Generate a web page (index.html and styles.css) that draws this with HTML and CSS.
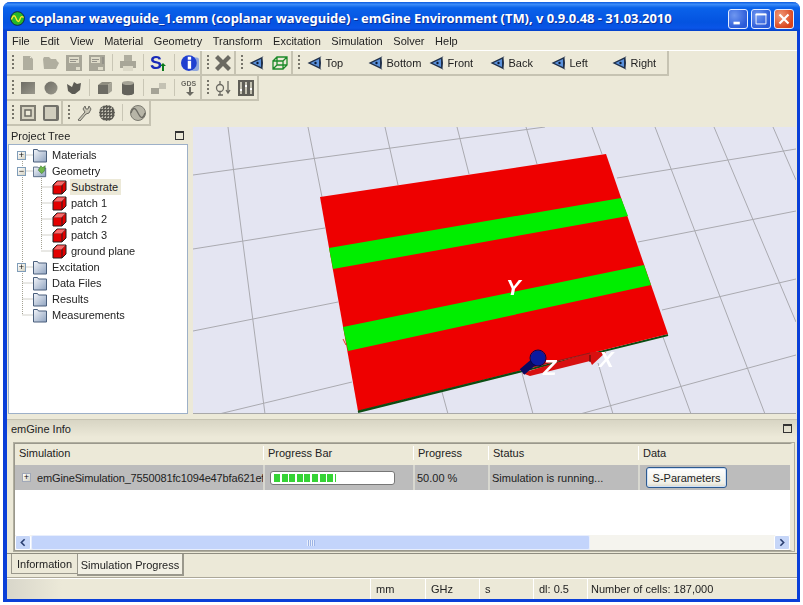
FILE: index.html
```html
<!DOCTYPE html>
<html lang="en">
<head>
<meta charset="utf-8">
<title>emGine Environment</title>
<link rel="stylesheet" href="styles.css">
</head>
<body>
<svg class="defs" width="0" height="0" aria-hidden="true">
  <defs>
    <linearGradient id="gFolder" x1="0" y1="0" x2="1" y2="1"><stop offset="0" stop-color="#f4f6fa"/><stop offset="1" stop-color="#8fa3c0"/></linearGradient>
    <linearGradient id="gGrey" x1="0" y1="0" x2="1" y2="1"><stop offset="0" stop-color="#6d6c64"/><stop offset="1" stop-color="#9a988c"/></linearGradient>
    <symbol id="i-new" viewBox="0 0 16 16"><path d="M3 1h7l3 3v11H3z" fill="#b0ae9f"/><path d="M10 2h1v1h-1z" fill="#ece9d8"/></symbol>
    <symbol id="i-open" viewBox="0 0 16 16"><path d="M0 4l1-2h5l2 2h5l1 2 2 2-3 6H1z" fill="#b0ae9f"/></symbol>
    <symbol id="i-save" viewBox="0 0 16 16"><path d="M0 0h16v16H0z" fill="#a8a698"/><path d="M3 2h10v6H3z" fill="#dedbc9"/><path d="M4 4h8v1H4zM4 6h6v1H4z" fill="#95938a"/><path d="M10 12h4v3h-4z" fill="#dedbc9"/></symbol>
    <symbol id="i-saveas" viewBox="0 0 16 16"><path d="M0 0h16v16H0z" fill="#a8a698"/><path d="M2 2h9v6H2z" fill="#dedbc9"/><path d="M3 4h7v1H3zM3 6h5v1H3zM13 2h2v7h-2z" fill="#95938a"/><path d="M9 12h5v3H9z" fill="#dedbc9"/></symbol>
    <symbol id="i-print" viewBox="0 0 16 16"><path d="M4 0h8v6H4z" fill="#b0ae9f"/><path d="M0 6h16v7H0z" fill="#a8a698"/><path d="M3 11h10v5H3z" fill="#dcd9c8"/></symbol>
    <symbol id="i-s" viewBox="0 0 18 18"><text x="0" y="15" class="svg-s">S</text><path d="M10 12l3-3 3 3h-2v5h-2v-5z" fill="#0a7a1c"/></symbol>
    <symbol id="i-info" viewBox="0 0 16 16"><rect x="9" y="3" width="7" height="12" rx="2" fill="#8fa6dc"/><circle cx="7" cy="8" r="7" fill="#1f3fd0"/><path d="M6 2.500h3v2.500H6zM6 6h3v7H6z" fill="#fff"/></symbol>
    <symbol id="i-x" viewBox="0 0 16 16"><path d="M3 0l5 5 5-5 3 3-5 5 5 5-3 3-5-5-5 5-3-3 5-5-5-5z" fill="#6b6a62"/></symbol>
    <symbol id="i-view" viewBox="0 0 16 14"><path d="M0.500 7L13 1l1.500-1-1 1.500.5 5.500-.5 5.500 1 1.500-1.500-1z" fill="#20304a"/><path d="M3.500 7L12 3v8z" fill="#5b92dc"/><circle cx="8.500" cy="7" r="1.200" fill="#0d1a33"/></symbol>
    <symbol id="i-wire" viewBox="0 0 16 14"><path d="M1 5h10v8H1zM1 5l4-4h10v8l-4 4M5 1v8h10M5 9l-4 4M11 5l4-4" fill="none" stroke="#1c8a2a" stroke-width="1.300"/></symbol>
    <symbol id="i-rect" viewBox="0 0 16 16"><rect x="1" y="2" width="14" height="12" fill="url(#gGrey)"/></symbol>
    <symbol id="i-circ" viewBox="0 0 16 16"><circle cx="8" cy="8" r="6.500" fill="url(#gGrey)"/></symbol>
    <symbol id="i-poly" viewBox="0 0 16 16"><path d="M1 4l5 3 2-5 3 2 4-1-1 7-5 4H6L2 11z" fill="#5c5b54"/></symbol>
    <symbol id="i-box" viewBox="0 0 16 16"><path d="M1 5h10v9H1z" fill="#6d6c64"/><path d="M1 5l4-3h10l-4 3z" fill="#8f8d80"/><path d="M11 5l4-3v9l-4 3z" fill="#a5a396"/></symbol>
    <symbol id="i-cyl" viewBox="0 0 16 16"><path d="M2 3h12v10c0 3-12 3-12 0z" fill="#63625b"/><ellipse cx="8" cy="3" rx="6" ry="2" fill="#a5a396"/></symbol>
    <symbol id="i-dual" viewBox="0 0 16 16"><path d="M0 8h8v6H0z" fill="#a5a396"/><path d="M8 3h7v6H8z" fill="#c4c2b4"/></symbol>
    <symbol id="i-gds" viewBox="0 0 18 18"><text x="0" y="7" class="svg-gds">GDS</text><path d="M8 8h2v5h3l-4 4-4-4h3z" fill="#6b6a62"/></symbol>
    <symbol id="i-port" viewBox="0 0 16 16"><circle cx="5" cy="8" r="3.500" fill="none" stroke="#6b6a62" stroke-width="1.300"/><path d="M5 1v3M5 12v3M3 15h5M13 1v11M11 10l2 3 2-3" fill="none" stroke="#6b6a62" stroke-width="1.300"/></symbol>
    <symbol id="i-sliders" viewBox="0 0 16 16"><rect width="16" height="16" fill="#5f5e57"/><path d="M3 2v12M8 2v12M13 2v12" stroke="#e5e2d0" stroke-width="1.500"/><path d="M2 9h2v2H2zM7 5h2v2H7zM12 8h2v2h-2z" fill="#fff"/></symbol>
    <symbol id="i-frame" viewBox="0 0 16 16"><rect width="16" height="16" fill="#807e73"/><rect x="2" y="2" width="12" height="12" fill="#d6d3c2"/><rect x="5" y="5" width="6" height="6" fill="#ece9d8" stroke="#6b6a62" stroke-width="1.500"/></symbol>
    <symbol id="i-solid" viewBox="0 0 16 16"><rect width="16" height="16" rx="2" fill="#72716a"/><rect x="2" y="2" width="11" height="12" fill="#d0cdbd"/></symbol>
    <symbol id="i-wrench" viewBox="0 0 16 16"><path d="M2 15l7-8-2-3 2-3 1 3 2 0 1-3 2 3-2 4-3 1-6 7z" fill="#c9c6b6" stroke="#6b6a62"/></symbol>
    <symbol id="i-mesh" viewBox="0 0 16 16"><circle cx="8" cy="8" r="8" fill="#5c5b54"/><path d="M0 3h16M0 6h16M0 9h16M0 12h16M3 0v16M6 0v16M9 0v16M12 0v16" stroke="#ece9d8" stroke-width="1" stroke-dasharray="1 2"/></symbol>
    <symbol id="i-wave" viewBox="0 0 16 16"><circle cx="8" cy="8" r="7.500" fill="#b7b5a7" stroke="#7b7a70"/><path d="M1 8c2-6 4-6 7 0s5 6 7 0" fill="none" stroke="#6b6a62" stroke-width="1.300"/></symbol>
    <symbol id="i-folder" viewBox="0 0 14 16"><path d="M0.500 2.500h4l1 1.500h8v11h-13z" fill="url(#gFolder)" stroke="#4a5f7c"/></symbol>
    <symbol id="i-cube" viewBox="0 0 15 15"><path d="M1 5l4-4h9v9l-4 4H1z" fill="#e30000" stroke="#202020"/><path d="M1 5h9v9M10 5l4-4" fill="none" stroke="#202020"/><path d="M1.500 5.500l4-4h8l-4 4z" fill="#f86a6a"/></symbol>
  </defs>
</svg>

<div class="window">
  <header class="titlebar">
    <svg class="app-icon" viewBox="0 0 16 16"><circle cx="8" cy="8" r="7.300" fill="#28b82a" stroke="#123"/><path d="M1.500 9c2-5 3.500-5 5-1s3 4 4 1 2-4 4-2" fill="none" stroke="#ffe92e" stroke-width="1.500"/></svg>
    <span class="title-text">coplanar waveguide_1.emm (coplanar waveguide) - emGine Environment (TM), v 0.9.0.48 - 31.03.2010</span>
    <div class="win-btns">
      <span class="win-btn"><svg viewBox="0 0 20 20"><rect x="5" y="13" width="7" height="3" fill="#fff"/></svg></span>
      <span class="win-btn"><svg viewBox="0 0 20 20"><path d="M4.500 4.500h11v11h-11z" fill="none" stroke="#fff"/><path d="M4 4h12v2H4z" fill="#fff"/></svg></span>
      <span class="win-btn close"><svg viewBox="0 0 20 20"><path d="M5 5l10 10M15 5L5 15" stroke="#fff" stroke-width="2.400"/></svg></span>
    </div>
  </header>

  <nav class="menubar">
    <span>File</span><span>Edit</span><span>View</span><span>Material</span><span>Geometry</span><span>Transform</span><span>Excitation</span><span>Simulation</span><span>Solver</span><span>Help</span>
  </nav>

  <div class="toolrow first">
    <div class="toolbar w195"><i class="grip"></i>
      <b class="tb"><svg><use href="#i-new"/></svg></b><b class="tb"><svg><use href="#i-open"/></svg></b><b class="tb"><svg><use href="#i-save"/></svg></b><b class="tb"><svg><use href="#i-saveas"/></svg></b><i class="sep"></i>
      <b class="tb"><svg><use href="#i-print"/></svg></b><i class="sep"></i>
      <b class="tb"><svg class="lg"><use href="#i-s"/></svg></b><i class="sep"></i>
      <b class="tb"><svg class="lg"><use href="#i-info"/></svg></b>
    </div>
    <div class="toolbar w34"><i class="grip"></i><b class="tb"><svg><use href="#i-x"/></svg></b></div>
    <div class="toolbar w57"><i class="grip"></i><b class="tb"><svg><use href="#i-view"/></svg></b><b class="tb"><svg><use href="#i-wire"/></svg></b></div>
    <div class="toolbar w376"><i class="grip"></i>
      <span class="vb"><svg><use href="#i-view"/></svg>Top</span>
      <span class="vb"><svg><use href="#i-view"/></svg>Bottom</span>
      <span class="vb"><svg><use href="#i-view"/></svg>Front</span>
      <span class="vb"><svg><use href="#i-view"/></svg>Back</span>
      <span class="vb"><svg><use href="#i-view"/></svg>Left</span>
      <span class="vb"><svg><use href="#i-view"/></svg>Right</span>
    </div>
  </div>
  <div class="toolrow">
    <div class="toolbar w195"><i class="grip"></i>
      <b class="tb"><svg><use href="#i-rect"/></svg></b><b class="tb"><svg><use href="#i-circ"/></svg></b><b class="tb"><svg><use href="#i-poly"/></svg></b><i class="sep"></i>
      <b class="tb"><svg><use href="#i-box"/></svg></b><b class="tb"><svg><use href="#i-cyl"/></svg></b><i class="sep"></i>
      <b class="tb"><svg><use href="#i-dual"/></svg></b><i class="sep"></i>
      <b class="tb"><svg class="lg"><use href="#i-gds"/></svg></b>
    </div>
    <div class="toolbar w57"><i class="grip"></i><b class="tb"><svg><use href="#i-port"/></svg></b><b class="tb"><svg><use href="#i-sliders"/></svg></b></div>
  </div>
  <div class="toolrow">
    <div class="toolbar w56"><i class="grip"></i><b class="tb"><svg><use href="#i-frame"/></svg></b><b class="tb"><svg><use href="#i-solid"/></svg></b></div>
    <div class="toolbar w88"><i class="grip"></i><b class="tb"><svg><use href="#i-wrench"/></svg></b><b class="tb"><svg><use href="#i-mesh"/></svg></b><i class="sep"></i><b class="tb"><svg><use href="#i-wave"/></svg></b></div>
  </div>

  <main class="workspace">
    <section class="tree-dock">
      <div class="dock-title">Project Tree<span class="dock-btn"></span></div>
      <div class="tree">
        <svg class="tree-lines" viewBox="0 0 180 180"><path d="M13.500 9v160M13.500 25h12M13.500 9h12M13.500 121h12M13.500 137h12M13.500 153h12M13.500 169h12M32.500 30v73M32.500 41h11M32.500 57h11M32.500 73h11M32.500 89h11M32.500 105h11" fill="none" stroke="#a5a394" stroke-dasharray="1 1"/></svg>
        <div class="node"><i class="exp">+</i><svg class="folder"><use href="#i-folder"/></svg>Materials</div>
        <div class="node"><i class="exp">−</i><svg class="folder" viewBox="0 0 16 16"><path d="M0.500 3.500h5l1 1h8v10h-14z" fill="url(#gFolder)" stroke="#4a5f7c"/><path d="M6 7l3-5 2 2 3-2-1 6-3 3z" fill="#6fb84a" stroke="#2f6a2a" stroke-width=".6"/></svg>Geometry</div>
        <div class="node child"><svg class="cube"><use href="#i-cube"/></svg><span class="current">Substrate</span></div>
        <div class="node child"><svg class="cube"><use href="#i-cube"/></svg><span>patch 1</span></div>
        <div class="node child"><svg class="cube"><use href="#i-cube"/></svg><span>patch 2</span></div>
        <div class="node child"><svg class="cube"><use href="#i-cube"/></svg><span>patch 3</span></div>
        <div class="node child"><svg class="cube"><use href="#i-cube"/></svg><span>ground plane</span></div>
        <div class="node"><i class="exp">+</i><svg class="folder"><use href="#i-folder"/></svg>Excitation</div>
        <div class="node"><i class="exp none"></i><svg class="folder"><use href="#i-folder"/></svg>Data Files</div>
        <div class="node"><i class="exp none"></i><svg class="folder"><use href="#i-folder"/></svg>Results</div>
        <div class="node"><i class="exp none"></i><svg class="folder"><use href="#i-folder"/></svg>Measurements</div>
      </div>
    </section>
    <section class="viewport">
      <svg viewBox="193 127 603 287" width="603" height="287">
        <g class="grid">
          <path d="M228 127L265 414M308 127L322 197M385 127L398 185M457 127L469 174M526 127L537 164M592 127L602 154M655 127L765 414M714 127L796 322M773 127L796 180M442 392L448 414M522 373L533 414M598 363L613 414M663 337L691 414"/>
          <path d="M193 175L545 127M193 249L325 228M617 178L796 149M193 331L338 302M638 242L796 211M219 414L352 382M662 310L796 279M580 414L796 355"/>
        </g>
        <path d="M343 339l3 6" stroke="#f03020" fill="none"/>
        <path d="M358 412L668 335" stroke="#0b4d12" stroke-width="2" fill="none"/>
        <polygon points="320,197 606,154 668,334 358,411" fill="#ee0000"/>
        <polygon points="329,248 621,198 628,216 333,269" fill="#00ee00"/>
        <polygon points="343,327 644,265 651,285 348,351" fill="#00ee00"/>
        <path d="M358 411L520 371" stroke="#0b4d12" stroke-width="1" fill="none"/>
        <polygon points="522,373 592,352 606,352 592,365 590,361 530,376" fill="#d81010"/>
        <path d="M528 368L590 353" stroke="#7a2020" stroke-width=".8" fill="none"/>
        <path d="M590 355v7" stroke="#5a1010" stroke-width="1.200" fill="none"/>
        <path d="M522 372L536 360" stroke="#0a0a60" stroke-width="7" fill="none"/>
        <circle cx="538" cy="358" r="7.500" fill="#0c1aa0"/>
        <circle cx="538" cy="358" r="8" fill="none" stroke="#06064e"/>
        <text x="506" y="295" class="axis">Y</text>
        <text x="543" y="375" class="axis">Z</text>
        <text x="599" y="367" class="axis">X</text>
      </svg>
    </section>
  </main>

  <section class="info-dock">
    <div class="dock-title info">emGine Info<span class="dock-btn"></span></div>
    <div class="tab-panel">
      <div class="table">
        <div class="t-head">
          <span class="c1">Simulation</span><span class="c2">Progress Bar</span><span class="c3">Progress</span><span class="c4">Status</span><span class="c5">Data</span>
        </div>
        <div class="t-row">
          <span class="c1"><i class="exp small">+</i><span class="sim-name">emGineSimulation_7550081fc1094e47bfa621ef</span></span>
          <span class="c2"><span class="pbar"><span class="pfill"></span></span></span>
          <span class="c3">50.00 %</span>
          <span class="c4">Simulation is running...</span>
          <span class="c5"><button class="sbtn" type="button">S-Parameters</button></span>
        </div>
        <div class="t-empty"></div>
        <div class="hscroll">
          <span class="sb-btn"><svg viewBox="0 0 16 16"><path d="M10 4L6 8l4 4" fill="none" stroke="#2a3f70" stroke-width="2"/></svg></span>
          <span class="sb-thumb"><em></em></span>
          <span class="sb-track"></span>
          <span class="sb-btn"><svg viewBox="0 0 16 16"><path d="M6 4l4 4-4 4" fill="none" stroke="#2a3f70" stroke-width="2"/></svg></span>
        </div>
      </div>
    </div>
    <div class="tabs">
      <span class="tab">Information</span>
      <span class="tab active">Simulation Progress</span>
    </div>
  </section>

  <footer class="statusbar">
    <span class="st grow"></span>
    <span class="st s1">mm</span><span class="st s2">GHz</span><span class="st s3">s</span><span class="st s4">dl: 0.5</span><span class="st s5">Number of cells: 187,000</span>
  </footer>
</div>
</body>
</html>
```

FILE: styles.css
```css
* { box-sizing: border-box; }
html, body { margin: 0; padding: 0; background: #fff; overflow: hidden; }
body { font: 11px "Liberation Sans", sans-serif; color: #222; width: 803px; height: 605px; }
.defs { position: absolute; }
.svg-s { font: bold 18px "Liberation Sans", sans-serif; fill: #1a2bb8; }
.svg-gds { font: bold 7px "Liberation Sans", sans-serif; fill: #6b6a62; }

.window {
  width: 797px; height: 600px; margin: 2px 0 0 3px;
  background: #ece9d8;
  border: solid #0a3fd8; border-width: 0 3px 3px 4px;
  border-radius: 7px 7px 0 0;
  display: flex; flex-direction: column;
  filter: blur(.35px);
}

.titlebar {
  height: 29px; margin: 0 -3px 0 -4px; padding: 0 6px 0 7px; flex: none;
  display: flex; align-items: center;
  background: linear-gradient(#0a5ae0 0, #3c8cf8 8%, #0a62ea 20%, #0453e0 70%, #0a55e8 90%, #0340c8 100%);
  border-radius: 7px 7px 0 0;
}
.app-icon { width: 15px; height: 15px; flex: none; margin-top: 3px; }
.title-text { margin-left: 4px; color: #fff; font: bold 13px "Noto Sans", sans-serif; letter-spacing: -.045px; white-space: nowrap; text-shadow: 1px 1px 0 #0a2f9a; margin-top: 2px; }
.win-btns { margin-left: auto; display: flex; gap: 3px; margin-top: 5px; }
.win-btn { width: 20px; height: 20px; border: 1px solid #e4ecff; border-radius: 3px; background: radial-gradient(circle at 30% 30%, #6f97f0, #2a5ad8 75%); display: block; }
.win-btn.close { background: radial-gradient(circle at 30% 30%, #f09a78, #d8431c 75%); }
.win-btn svg { display: block; width: 18px; height: 18px; }

.menubar { height: 19px; flex: none; padding-left: 5px; display: flex; align-items: center; gap: 10.600px; }

.toolrow { height: 25px; flex: none; display: flex; }
.toolrow.first { height: 26px; border-top: 1px solid #fff; }
.toolbar {
  display: flex; align-items: center; height: 100%; padding-left: 9.500px;
  border-right: 2px solid #c6c3b2; border-bottom: 2px solid #c6c3b2; flex: none;
}
.w195 { width: 195px; } .w34 { width: 34px; } .w57 { width: 57px; } .w376 { width: 376px; }
.w56 { width: 56px; } .w88 { width: 88px; }
.grip { width: 2px; height: 16px; margin: 0 3px 0 -5px; flex: none; background: repeating-linear-gradient(#77756a 0 2px, transparent 2px 4px); }
.tb { width: 23px; height: 22px; display: flex; align-items: center; justify-content: center; flex: none; }
.tb svg { width: 16px; height: 16px; display: block; }
.tb svg.lg { width: 18px; height: 18px; }
.sep { width: 8px; height: 17px; flex: none; background: linear-gradient(#c9c6b5, #c9c6b5) center / 1px 100% no-repeat; }
.vb { width: 61px; flex: none; display: flex; align-items: center; }
.vb svg { width: 16px; height: 14px; margin-right: 3px; flex: none; display: block; }
.w376 .grip { margin-right: 7px; }

.workspace { height: 288px; flex: none; display: flex; padding-top: 1px; }
.tree-dock { width: 183px; flex: none; padding: 0 2px 0 1px; display: flex; flex-direction: column; }
.dock-title { height: 17px; flex: none; display: flex; align-items: center; justify-content: space-between; padding: 0 4px 0 3px; }
.dock-btn { width: 9px; height: 9px; border: 1px solid #333; border-top-width: 2px; display: block; }
.tree { flex: 1; position: relative; background: #fff; border: 1px solid #9db0c8; padding-top: 2px; }
.tree-lines { position: absolute; left: 0; top: 1px; width: 180px; height: 180px; }
.node { position: relative; height: 16px; display: flex; align-items: center; padding-left: 8px; white-space: nowrap; }
.exp { width: 9px; height: 9px; flex: none; border: 1px solid #7f9db9; background: linear-gradient(135deg, #fff, #d5d2c2); font: 9px/7px "Liberation Sans", sans-serif; color: #111; text-align: center; margin-right: 7px; }
.exp.none { visibility: hidden; }
.folder { width: 14px; height: 16px; flex: none; margin-right: 5px; }
.node.child { padding-left: 43px; }
.cube { width: 15px; height: 15px; flex: none; margin-right: 3px; }
.node.child span { padding: 0 3px 0 1px; line-height: 16px; }
.current { background: #ece9d8; }

.viewport { flex: 1; margin-left: 3px; margin-right: 1px; height: 287px; overflow: hidden; background: #e4e5f2; border-bottom: 1px solid #a9a9a9; }
.viewport svg { display: block; }
.grid path { stroke: #aaaab0; stroke-width: 1; fill: none; }
.axis { font: italic bold 22px "Liberation Sans", sans-serif; fill: #fff; }

.info-dock { flex: 1; min-height: 0; display: flex; flex-direction: column; padding-top: 5px; }
.dock-title.info { height: 18px; border-top: 1px solid #c6c3b2; background: linear-gradient(#d8d5c4, #ece9d8); padding: 0 5px 0 4px; }
.tab-panel { height: 112px; margin: 5px 2px 0 6px; flex: none; }
.table { height: 110px; border: 2px solid #9a988c; border-right-width: 5px; border-right-color: #ece9d8; display: flex; flex-direction: column; background: #ece9d8; outline: 1px solid #b0ae9f; outline-offset: -1px; }
.t-head { height: 18px; flex: none; display: flex; align-items: center; }
.t-head span { height: 14px; display: flex; align-items: center; padding-left: 4px; border-left: 1px solid #fff; }
.t-head .c1 { border-left: 0; }
.c1 { width: 248px; flex: none; } .c2 { width: 150px; flex: none; } .c3 { width: 75px; flex: none; } .c4 { width: 150px; flex: none; } .c5 { width: 150px; flex: none; }
.t-row { margin-top: 3px; height: 25px; flex: none; display: flex; align-items: center; background: #bcbcbc; }
.t-row > span { height: 100%; display: flex; align-items: center; padding-left: 2px; border-left: 2px solid #d8d8d0; white-space: nowrap; overflow: hidden; }
.t-row > .c1 { border-left: 0; padding-left: 7px; }
.sim-name { letter-spacing: -.14px; }
.exp.small { margin-right: 6px; border-color: #a0a8b8; }
.t-row > .c2 { padding-left: 5px; }
.pbar { width: 125px; height: 14px; display: block; border: 1px solid #777; border-radius: 3px; background: #fff; padding: 2px 3px; }
.pfill { display: block; width: 62px; height: 8px; background: repeating-linear-gradient(90deg, #35d335 0 6px, #fff 6px 7.600px); }
.t-row > .c5 { padding-left: 6px; }
.sbtn { width: 81px; height: 21px; font: 11px "Liberation Sans", sans-serif; color: #222; padding: 0; border: 1px solid #2c5a90; border-radius: 3px; background: linear-gradient(#fff, #f0efe6 80%, #d8d5c6); box-shadow: inset 0 0 0 1px #cfe0f6; }
.t-empty { flex: 1; background: #fff; }
.hscroll { height: 15px; flex: none; display: flex; background: #f5f4ee; }
.sb-btn { width: 16px; flex: none; background: #c6d6f8; border: 1px solid #fff; border-radius: 2px; display: block; }
.sb-btn svg { display: block; width: 14px; height: 13px; }
.sb-thumb { width: 559px; flex: none; background: #c3d4fb; border: 1px solid #e8eefc; border-radius: 2px; display: flex; align-items: center; justify-content: center; }
.sb-thumb em { width: 8px; height: 6px; background: repeating-linear-gradient(90deg, #e8eefc 0 1px, #9db4e6 1px 2px); display: block; }
.sb-track { flex: 1; }

.tabs { display: flex; align-items: flex-start; height: 24px; flex: none; padding-left: 4px; border-top: 1px solid #8f8d80; margin: -1px 0 0; background: #ece9d8; }
.tab { height: 20px; width: 66px; display: flex; align-items: center; justify-content: center; border: solid #9a988c; border-width: 0 0 1px 1px; background: #ece9d8; white-space: nowrap; }
.tab.active { width: 107px; height: 22px; border-width: 0 2px 2px 1px; background: #f2f0e4; padding-top: 2px; }

.statusbar { height: 22px; flex: none; display: flex; border-top: 1px solid #aca899; background: linear-gradient(90deg, #d8d6ca 0, #ece9d8 55px); box-shadow: inset 0 1px 0 #fff; }
.st { display: flex; align-items: center; padding-left: 5px; border-left: 1px solid #fff; flex: none; }
.grow { border: 0; width: 363px; }
.s1 { width: 55px; } .s2 { width: 54px; } .s3 { width: 54px; } .s4 { width: 54px; } .s5 { flex: 1; padding-left: 3px; }
```
